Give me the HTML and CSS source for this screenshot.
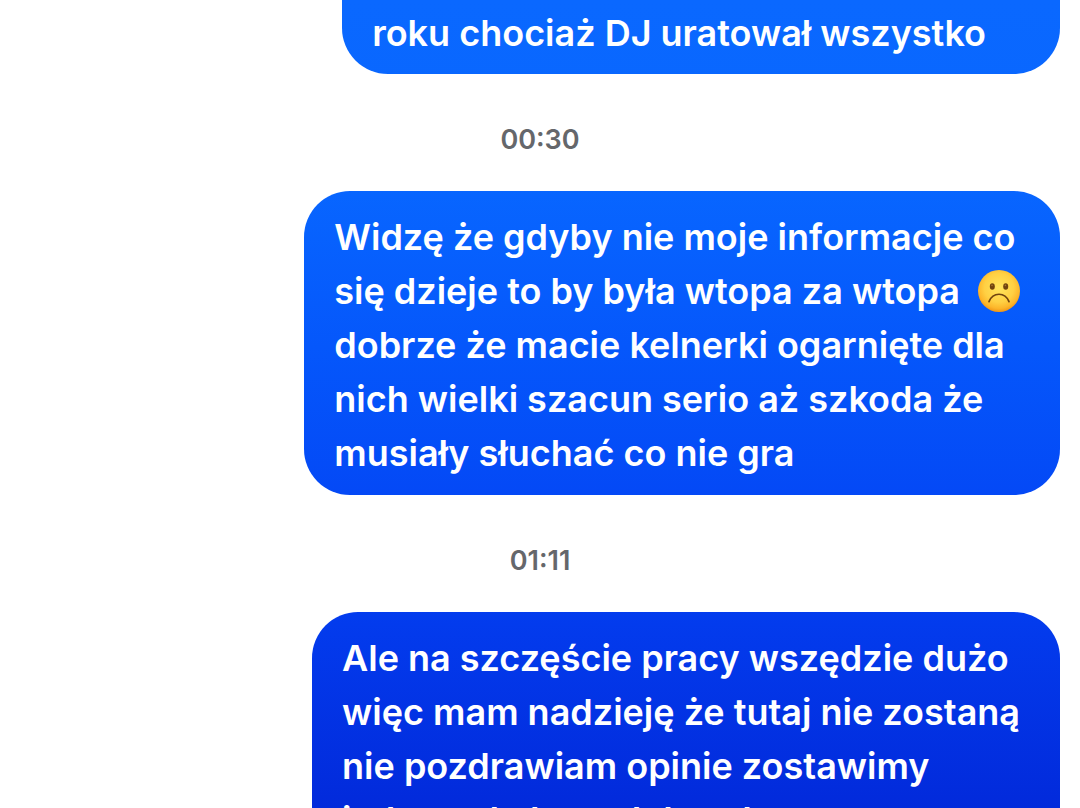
FILE: index.html
```html
<!DOCTYPE html>
<html lang="pl">
<head>
  <meta charset="UTF-8" />
  <meta name="viewport" content="width=device-width, initial-scale=1.0"/>
  <title>Wiadomości</title>
  <link rel="stylesheet" href="styles.css">
</head>
<body>
  <main class="chat">
    <p class="bubble bubble-cut">roku chociaż DJ uratował wszystko</p>

    <time class="timestamp" datetime="00:30">00:30</time>

    <p class="bubble">
      Widzę że gdyby nie moje informacje co<br>
      się dzieje to by była wtopa za wtopa
      <svg class="emoji" viewBox="0 0 42 42" role="img" aria-label="smutna buzia">
        <defs>
          <radialGradient id="face" cx="50%" cy="42%" r="58%">
            <stop offset="0" stop-color="#ffe45c"/>
            <stop offset="0.6" stop-color="#ffd043"/>
            <stop offset="0.85" stop-color="#fdb62a"/>
            <stop offset="1" stop-color="#ef9518"/>
          </radialGradient>
        </defs>
        <circle cx="21" cy="21" r="21" fill="url(#face)"/>
        <ellipse cx="14.3" cy="16.5" rx="2.5" ry="3.2" fill="#70430f"/>
        <ellipse cx="27.7" cy="16.5" rx="2.5" ry="3.2" fill="#70430f"/>
        <circle cx="14" cy="15.4" r="0.8" fill="#a9772c"/>
        <circle cx="27.4" cy="15.4" r="0.8" fill="#a9772c"/>
        <path d="M11 31.6C15 21.8 27 21.8 31 31.6" fill="none" stroke="#70430f" stroke-width="1.7" stroke-linecap="round"/>
      </svg><br>
      dobrze że macie kelnerki ogarnięte dla<br>
      nich wielki szacun serio aż szkoda że<br>
      musiały słuchać co nie gra
    </p>

    <time class="timestamp" datetime="01:11">01:11</time>

    <p class="bubble">
      Ale na szczęście pracy wszędzie dużo<br>
      więc mam nadzieję że tutaj nie zostaną<br>
      nie pozdrawiam opinie zostawimy<br>
      jedna z do baru dobrą d
    </p>
  </main>
</body>
</html>
```
FILE: styles.css
```css
:root {
  --bg: #ffffff;
  --text: #ffffff;
  --muted: #65676b;
}

body {
  background-color: var(--bg);
  font-family: Inter, 'Liberation Sans', sans-serif;
  font-weight: 600;
  margin: 0;
}

.chat {
  display: flex;
  flex-direction: column;
  align-items: flex-end;
  height: 100vh;
  padding: 0 20px;
  box-sizing: border-box;
  overflow: hidden;
}

/* the gradient is fixed to the window, each bubble shows its own part */
.bubble {
  flex-shrink: 0;
  margin: 0;
  padding: 19px 40px 15px 30px;
  border-radius: 46px;
  color: var(--text);
  font-size: 36px;
  line-height: 54px;
  white-space: nowrap;
  background: linear-gradient(#0a68ff 0%, #0866ff 23%, #0557fb 43%, #0449f6 61%, #033cee 76%, #022adb 100%) fixed;
}

/* continues above the top edge */
.bubble-cut {
  padding-top: 6px;
  padding-right: 74px;
  padding-bottom: 14px;
  border-top-left-radius: 0;
  border-top-right-radius: 0;
}

.emoji {
  width: 42px;
  height: 42px;
  margin-left: 9px;
  vertical-align: -8px;
}

.timestamp {
  flex-shrink: 0;
  align-self: center;
  padding: 48px 0 33px;
  color: var(--muted);
  font-size: 27px;
  line-height: 36px;
}
```
